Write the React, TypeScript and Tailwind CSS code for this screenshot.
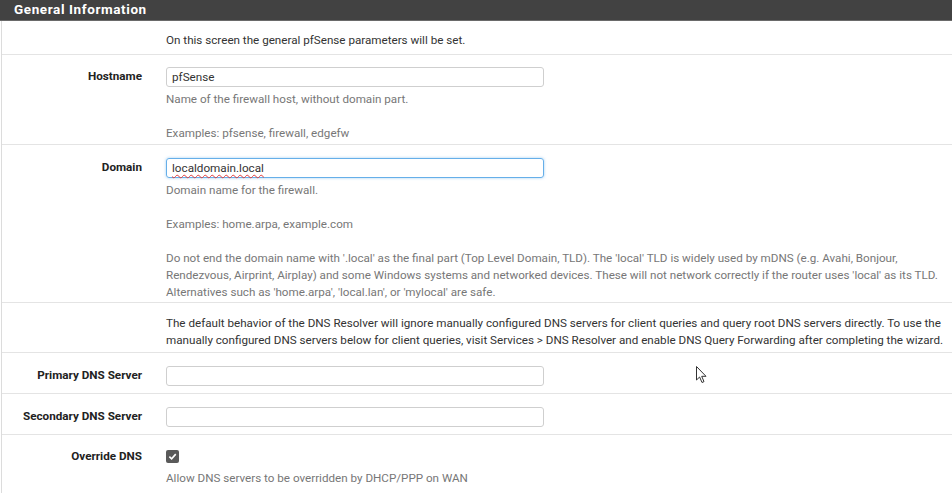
import React from 'react';

const font = { fontFamily: 'Roboto, "Liberation Sans", sans-serif' };

function Row({ label, children, className = '' }: { label?: string; children: React.ReactNode; className?: string }) {
  return (
    <div className={`flex border-b border-[#e4e4e4] ${className}`}>
      <div className="w-[152px] shrink-0 pr-[12px] text-right text-[11.7px] font-bold text-[#222] leading-[17px] pt-px">
        {label}
      </div>
      <div className="flex-1 pl-[12px] pr-1">{children}</div>
    </div>
  );
}

function Input({ value = '', focused = false }: { value?: string; focused?: boolean }) {
  return (
    <div
      className={`w-[378px] h-[20px] rounded-[3px] border px-[5px] text-[11.7px] leading-[18px] text-[#333] ${
        focused ? 'border-[#66afe9] shadow-[0_0_3px_rgba(102,175,233,0.6)]' : 'border-[#cfcfcf]'
      }`}
    >
      {focused ? (
        <span className="underline decoration-wavy decoration-[#e03c3c] decoration-[1px] underline-offset-[2px]">
          {value}
        </span>
      ) : (
        value
      )}
    </div>
  );
}

function Help({ children }: { children: React.ReactNode }) {
  return <div className="mt-[4px] whitespace-nowrap text-[11.65px] leading-[17px] text-[#777]">{children}</div>;
}

export default function App() {
  return (
    <div className="relative w-[952px] h-[493px] overflow-hidden bg-white" style={font}>
      <div className="h-[21px] bg-[#424242] border-b border-[#6a6a6a] pl-[14px] text-[13.5px] font-bold text-white leading-[19px] tracking-[0.6px]">
        General Information
      </div>
      <div className="border-l border-[#dcdcdc] ml-px">
        <Row className="h-[34px] pt-[11px]">
          <div className="text-[11.65px] leading-[17px] text-[#333]">
            On this screen the general pfSense parameters will be set.
          </div>
        </Row>
        <Row label="Hostname" className="h-[90px] pt-[12px]">
          <Input value="pfSense" />
          <Help>
            Name of the firewall host, without domain part.
            <br />
            <br />
            Examples: pfsense, firewall, edgefw
          </Help>
        </Row>
        <Row label="Domain" className="h-[158px] pt-[13px]">
          <Input value="localdomain.local" focused />
          <Help>
            Domain name for the firewall.
            <br />
            <br />
            Examples: home.arpa, example.com
            <br />
            <br />
            Do not end the domain name with '.local' as the final part (Top Level Domain, TLD). The 'local' TLD is widely
            used by mDNS (e.g. Avahi, Bonjour,
            <br />
            Rendezvous, Airprint, Airplay) and some Windows systems and networked devices. These will not network
            correctly if the router uses 'local' as its TLD.
            <br />
            Alternatives such as 'home.arpa', 'local.lan', or 'mylocal' are safe.
          </Help>
        </Row>
        <Row className="h-[50px] pt-[12px]">
          <div className="whitespace-nowrap text-[11.65px] leading-[16.5px] text-[#333]">
            The default behavior of the DNS Resolver will ignore manually configured DNS servers for client queries and
            query root DNS servers directly. To use the
            <br />
            manually configured DNS servers below for client queries, visit Services &gt; DNS Resolver and enable DNS
            Query Forwarding after completing the wizard.
          </div>
        </Row>
        <Row label="Primary DNS Server" className="h-[41px] pt-[13px]">
          <Input />
        </Row>
        <Row label="Secondary DNS Server" className="h-[41px] pt-[13px]">
          <Input />
        </Row>
        <Row label="Override DNS" className="h-[70px] pt-[12px] border-b-0">
          <div className="mt-[3px] flex h-[13px] w-[13px] items-center justify-center rounded-[2px] bg-[#5a5a5a]">
            <svg width="9" height="9" viewBox="0 0 10 10">
              <path d="M1.5 5.2 L4 7.6 L8.6 2.4" fill="none" stroke="white" strokeWidth="1.8" />
            </svg>
          </div>
          <Help>
            <div className="mt-[7px]">Allow DNS servers to be overridden by DHCP/PPP on WAN</div>
          </Help>
        </Row>
      </div>
      <svg className="absolute left-[696px] top-[366px]" width="12" height="18" viewBox="0 0 12 18">
        <path d="M0.5 0.5 L0.5 14 L3.6 11 L6 16.5 L8 15.6 L5.7 10.3 L10 10.3 Z" fill="white" stroke="#333" strokeWidth="1" />
      </svg>
    </div>
  );
}
